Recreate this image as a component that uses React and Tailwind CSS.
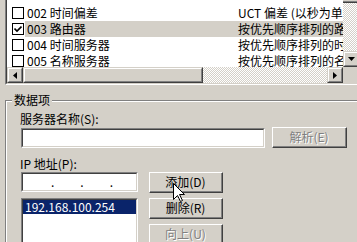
import React from 'react';

// Win2000-style DHCP option dialog fragment
const rows = [
  { id: '002', name: '时间偏差', desc: 'UCT 偏差 (以秒为单位)', checked: false },
  { id: '003', name: '路由器', desc: '按优先顺序排列的路由器地址', checked: true, selected: true },
  { id: '004', name: '时间服务器', desc: '按优先顺序排列的时间服务器', checked: false },
  { id: '005', name: '名称服务器', desc: '按优先顺序排列的名称服务器', checked: false },
];

const track = 'bg-[repeating-conic-gradient(#d4d0c8_0_25%,#ffffff_0_50%)] bg-[length:2px_2px]';

function Sunken({ className = '', innerClass = '', children }) {
  return (
    <div className={`border border-t-[#808080] border-l-[#808080] border-r-white border-b-white ${className}`}>
      <div className={`h-full w-full border border-t-[#404040] border-l-[#404040] border-r-[#d4d0c8] border-b-[#d4d0c8] bg-white ${innerClass}`}>
        {children}
      </div>
    </div>
  );
}

function Button({ children, disabled, className = '' }) {
  return (
    <div className={`border border-t-white border-l-white border-r-[#404040] border-b-[#404040] bg-[#d4d0c8] ${className}`}>
      <div className="flex h-full w-full items-center justify-center border-r border-b border-r-[#808080] border-b-[#808080] leading-[14px]">
        <span className={disabled ? 'text-[#808080] [text-shadow:1px_1px_0_#fff]' : ''}>{children}</span>
      </div>
    </div>
  );
}

function ScrollBtn({ className = '', children }) {
  return (
    <div className={`border border-t-[#d4d0c8] border-l-[#d4d0c8] border-r-[#404040] border-b-[#404040] bg-[#d4d0c8] ${className}`}>
      <div className="flex h-full w-full items-center justify-center border border-t-white border-l-white border-r-[#808080] border-b-[#808080]">
        {children}
      </div>
    </div>
  );
}

function Check({ checked }) {
  return (
    <div className="flex h-[12px] w-[12px] shrink-0 items-center justify-center border border-black bg-white">
      {checked && (
        <svg width="8" height="8" viewBox="0 0 8 8">
          <path d="M0.5 3.5 L3 6 L7.5 1.5" fill="none" stroke="#000" strokeWidth="1.6" />
        </svg>
      )}
    </div>
  );
}

export default function App() {
  return (
    <div className="relative h-[242px] w-[357px] overflow-hidden bg-[#d4d0c8] font-['Noto_Sans_CJK_SC',sans-serif] text-[12px] text-black">
      {/* list view */}
      <div className="ml-[5px] h-[85px] w-[356px] border-l border-r border-b border-l-[#808080] border-r-white border-b-white">
        <div className="flex h-full w-full flex-col border-l border-r border-b border-l-[#404040] border-r-[#d4d0c8] border-b-[#d4d0c8]">
          <div className="flex h-[67px]">
            <div className="w-[336px] overflow-hidden bg-white pt-[5px]">
              {rows.map((r) => (
                <div key={r.id} className="flex h-[16px] items-center">
                  <div className="pl-[5px] pr-[1px]">
                    <Check checked={r.checked} />
                  </div>
                  <div className={`flex h-full flex-1 items-center whitespace-nowrap leading-[16px] ${r.selected ? 'bg-[#d4d0c8]' : ''}`}>
                    <div className="w-[211px] shrink-0 pl-[2px]">{r.id} {r.name}</div>
                    <div className="overflow-hidden pl-[2px]">{r.desc}</div>
                  </div>
                </div>
              ))}
            </div>
            <div className="flex w-[16px] flex-col">
              <div className="h-[3px] border-r border-b border-r-[#404040] border-b-[#404040] bg-[#d4d0c8] shadow-[inset_-1px_-1px_0_#808080]" />
              <div className={`flex-1 ${track}`} />
              <ScrollBtn className="h-[16px]">
                <svg width="7" height="4" viewBox="0 0 7 4"><path d="M0 0 H7 L3.5 4 Z" fill="#000" /></svg>
              </ScrollBtn>
            </div>
          </div>
          <div className="flex h-[16px]">
            <ScrollBtn className="w-[16px]">
              <svg width="4" height="7" viewBox="0 0 4 7"><path d="M4 0 V7 L0 3.5 Z" fill="#000" /></svg>
            </ScrollBtn>
            <ScrollBtn className="w-[180px]" />
            <div className={`w-[124px] ${track}`} />
            <ScrollBtn className="w-[16px]">
              <svg width="4" height="7" viewBox="0 0 4 7"><path d="M0 0 V7 L4 3.5 Z" fill="#000" /></svg>
            </ScrollBtn>
            <div className="w-[16px] bg-[#d4d0c8]" />
          </div>
        </div>
      </div>

      {/* group box */}
      <div className="relative ml-[5px] mt-[15px] h-[200px] w-[400px] border-l border-t border-[#808080]">
        <div className="absolute -top-[8px] left-[6px] bg-[#d4d0c8] px-[2px] leading-[14px]">数据项</div>
        <div className="h-full w-full border-l border-t border-white pl-[13px] pt-[10px]">
          <div className="leading-[14px]">服务器名称(S):</div>
          <div className="mt-[1px] flex items-start">
            <Sunken className="ml-[1px] mt-[1px] h-[20px] w-[244px]" />
            <Button disabled className="ml-[7px] h-[21px] w-[75px]">解析(E)</Button>
          </div>
          <div className="mt-[9px] leading-[14px]">IP 地址(P):</div>
          <div className="mt-[1px] flex items-start">
            <div className="ml-[1px] w-[117px]">
              <Sunken className="h-[20px]" innerClass="flex items-center leading-[14px]">
                <div className="w-[28px]" />
                <span>.</span>
                <div className="w-[26px]" />
                <span>.</span>
                <div className="w-[26px]" />
                <span>.</span>
                <div className="flex-1" />
              </Sunken>
              <Sunken className="mt-[6px] h-[60px]">
                <div className="h-[14px] bg-[#0a246a] pl-[2px] leading-[14px] text-white">192.168.100.254</div>
              </Sunken>
            </div>
            <div className="ml-[11px] flex flex-col gap-[5px]">
              <Button className="h-[21px] w-[74px]">添加(D)</Button>
              <Button className="h-[21px] w-[74px]">删除(R)</Button>
              <Button disabled className="h-[21px] w-[74px]">向上(U)</Button>
            </div>
          </div>
        </div>
      </div>

      {/* mouse pointer */}
      <svg className="absolute left-[173px] top-[183px]" width="13" height="20" viewBox="0 0 13 20">
        <path d="M0.5 0.5 V16.5 L4.5 12.5 L7.5 18.5 L9.5 17.5 L6.5 11.5 H11.5 Z" fill="#fff" stroke="#000" strokeWidth="1" />
      </svg>
    </div>
  );
}
